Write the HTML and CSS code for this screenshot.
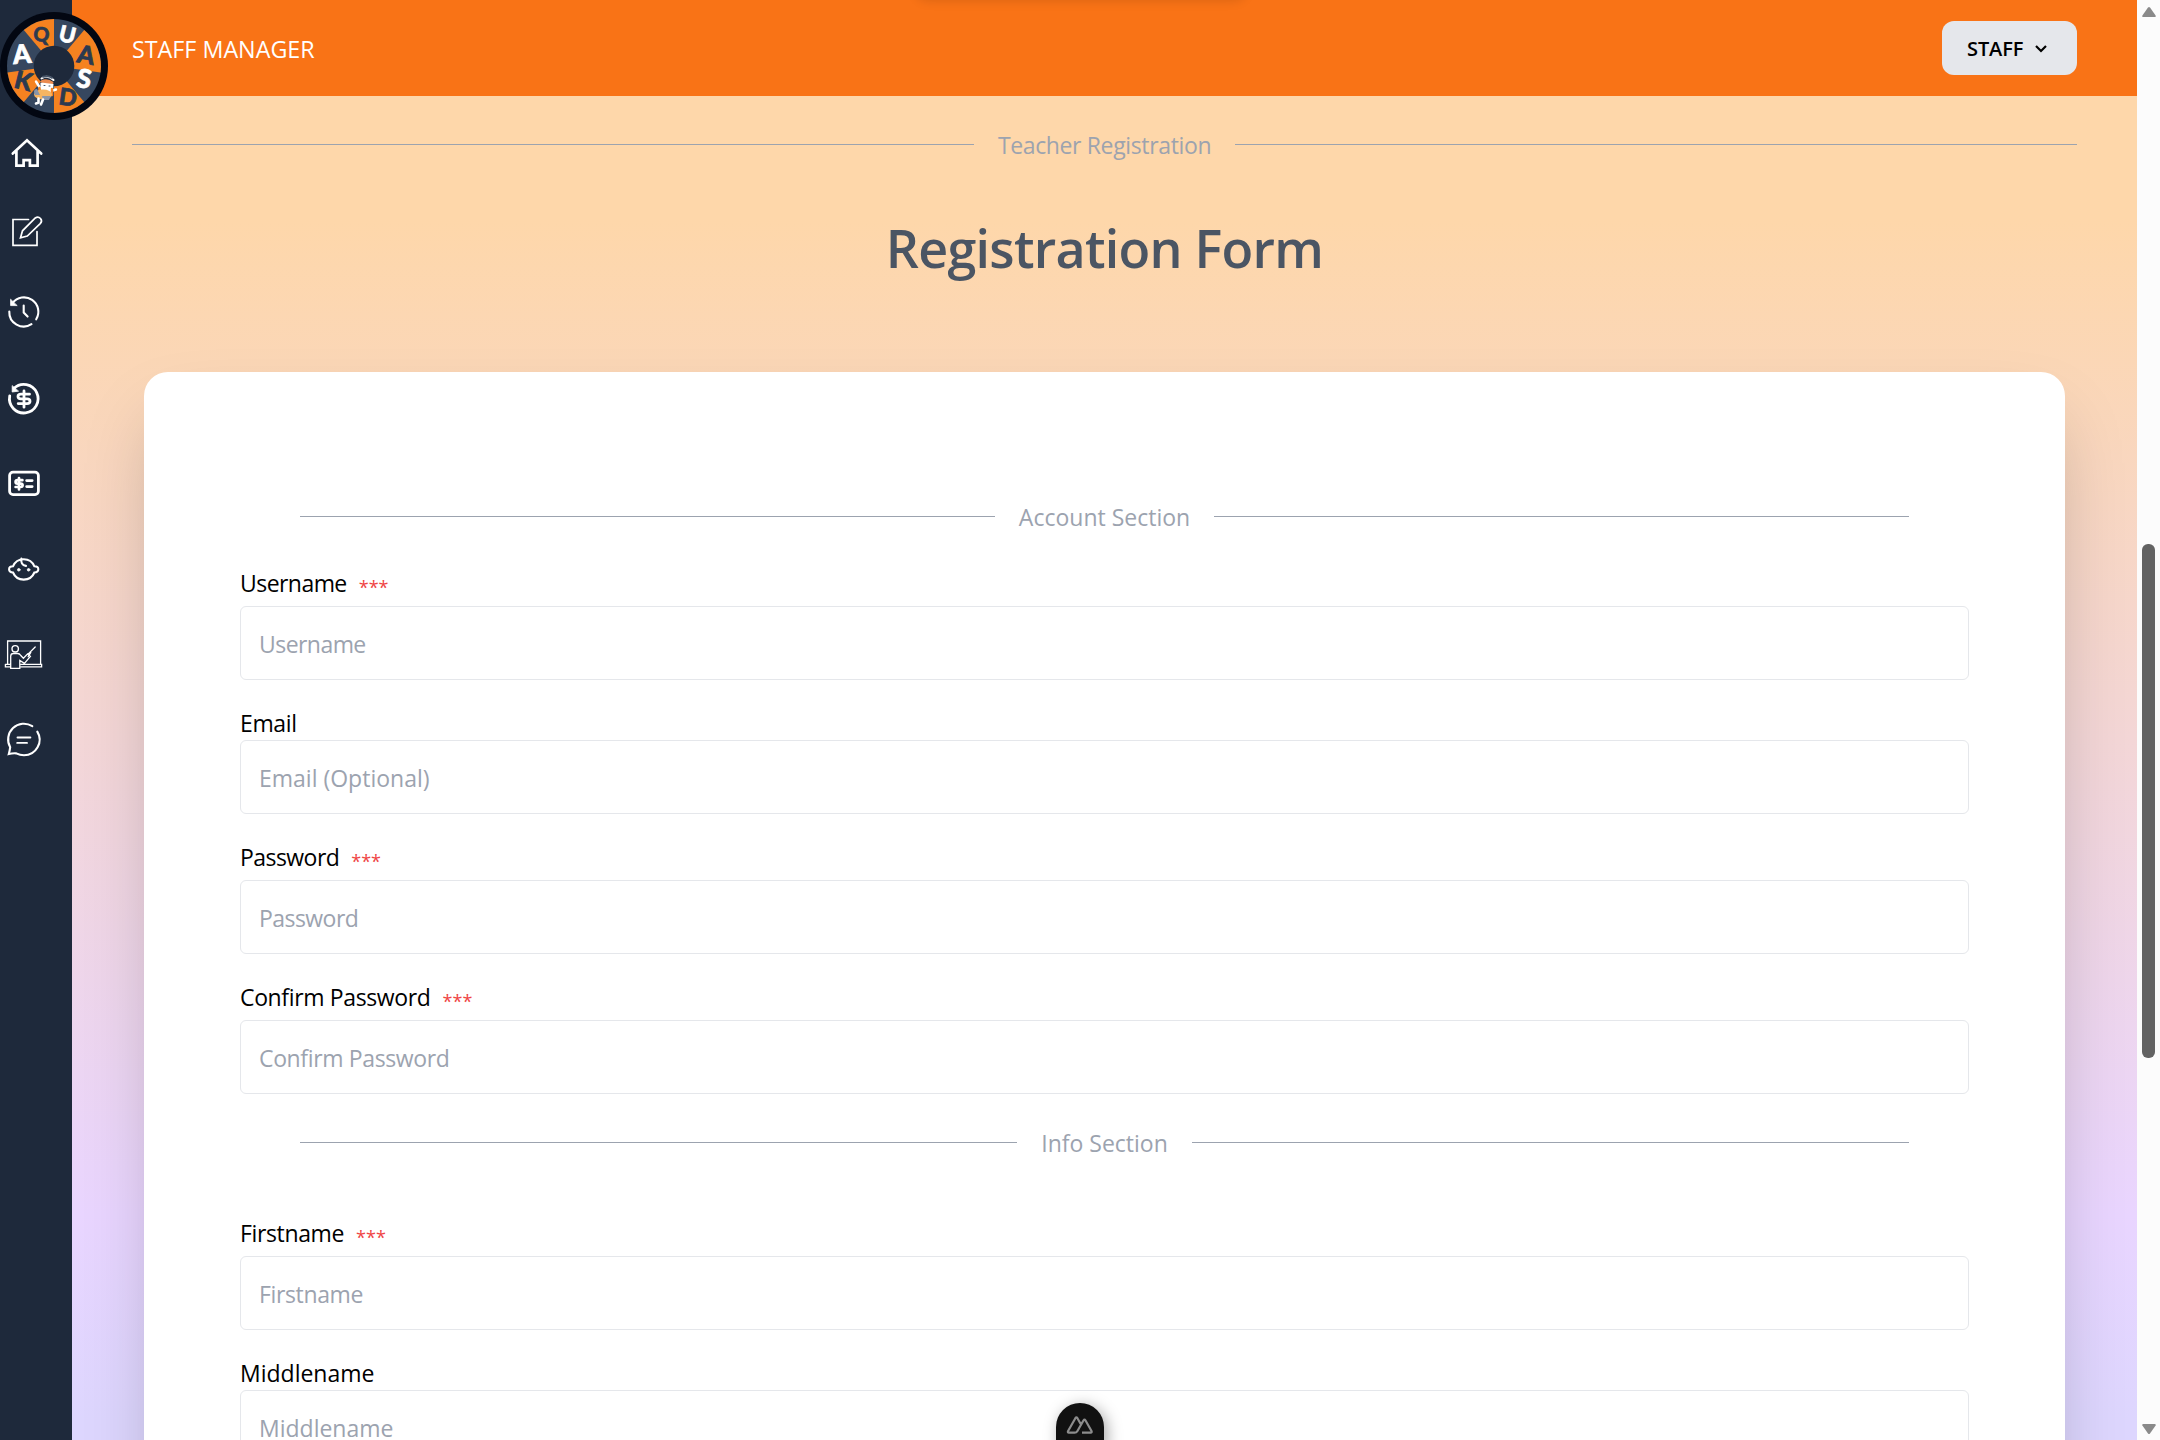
FILE: index.html
```html
<!DOCTYPE html>
<html lang="en">
<head>
<meta charset="utf-8">
<title>Staff Manager</title>
<link rel="stylesheet" href="styles.css">
</head>
<body>
<div class="app">
  <aside class="sidebar">
    <nav class="nav">
      <a class="nav-item nav-item-sm"><svg class="icon" viewBox="0 0 48 48"><path stroke-width="2.7" d="M12.8 24.5 27 11.3 41.2 24.5M16.4 22v14.6h7.2v-5.4h6.3v5.4h7.7V22"/></svg></a>
      <a class="nav-item nav-item-sm"><svg class="icon" viewBox="0 0 48 48"><path stroke-width="1.7" d="M28.5 12.5H13v25.8h24V24.5M20.5 30.8l2-7L35.3 11q2.8-2 5.2.5 2.2 2.6-.3 5.2L27.3 29Z"/></svg></a>
      <a class="nav-item"><svg class="icon" viewBox="0 0 48 48"><path stroke-width="2.1" d="M12.5 15a14.4 14.4 0 0 1 23.7 16.3M31.5 36.2A14.4 14.4 0 0 1 9.3 23.5M23.7 17.6v7l3.9 4"/><path class="solid" d="M10.6 11.6v6h6.2Z"/></svg></a>
      <a class="nav-item"><svg class="icon" viewBox="0 0 48 48"><path stroke-width="2.8" d="M14 14.2A14.3 14.3 0 1 1 9.7 22"/><path stroke-width="2.8" d="M29.5 20.2H21q-3 0-3 2.3T21 24.9h6q3 0 3 2.3t-3 2.4h-8.8M24 17v16.2"/><path class="solid" d="M12.2 12v6l6-.8Z"/></svg></a>
      <a class="nav-item"><svg class="icon" viewBox="0 0 48 48"><rect x="9.6" y="12.2" width="28.8" height="22.4" rx="3.4" stroke-width="2.8"/><path stroke-width="2.7" d="M22.4 20.2h-4.8q-2 0-2 1.7t2 1.7h3q2 0 2 1.7t-2 1.7h-5M19 18v11.4M26.6 20.6h5.6M26.6 26.6h5.6"/></svg></a>
      <a class="nav-item"><svg class="icon" viewBox="0 0 48 48"><path stroke-width="2.1" d="M13 20.3a11.6 11.6 0 0 1 21.4 0c5.2 0 5.2 6 0 6.2a11.6 11.6 0 0 1-21.4 0c-5.2-.2-5.2-6.2 0-6.2ZM21.4 12.5c-.8 4 .8 6.8 4.6 7.4"/><circle class="solid" cx="18.8" cy="23.8" r="1.3"/><circle class="solid" cx="28.6" cy="23.8" r="1.3"/></svg></a>
      <a class="nav-item"><svg class="icon" viewBox="0 0 48 48"><path stroke-width="1.3" d="M7.6 32V9h33v23M5.4 32.3H10M21 32.3h20.6v2.6H21M10 34.9H5.4v-2.6M10.7 36.3V24.2q0-2.7 2.7-2.7h4.2q2 0 3.2 2l2.6 2.7 4-4.2 3 2.3-6 7-4.6-2.8v7.8ZM27.8 22.4l7.4-7.4M28.2 24.6l2.6-4.3"/><circle cx="15.2" cy="16.8" r="3.2" stroke-width="1.4"/></svg></a>
      <a class="nav-item"><svg class="icon" viewBox="0 0 48 48"><path stroke-width="2.1" d="M32.3 9.2A15.7 15.7 0 0 0 10.2 30.2q-.4 3.4-1.4 6.8 4-.9 7.4-.6 3.8 1.9 7.8 1.9A15.6 15.6 0 0 0 37.3 14.6"/><path stroke-width="1.9" d="M17.5 20.5H30.4M17.2 25.9h9.8"/></svg></a>
    </nav>
    <svg class="logo" viewBox="0 0 108 108">
      <circle cx="54" cy="54" r="54" fill="#030712"/>
      <circle cx="54" cy="54" r="47" fill="#36475f"/>
      <g fill="#f58220">
        <path d="M54 54V7A47 47 0 0 0 23.8 18Z"/>
        <path d="M54 54 84.2 18A47 47 0 0 1 100.5 60.5Z"/>
        <path d="M54 54 84.2 90A47 47 0 0 1 54 101Z"/>
        <path d="M54 54 7.5 60.5A47 47 0 0 0 23.8 90Z"/>
      </g>
      <circle cx="54" cy="54" r="20.3" fill="#1e293b"/>
      <g class="logo-text">
        <text class="light" transform="translate(22 42) rotate(-4)" y="9.5">A</text>
        <text transform="translate(41.5 22.5) rotate(8) scale(.76)" y="9">Q</text>
        <text class="light" transform="translate(67.5 22.5) rotate(14) scale(.85)" y="9.5">U</text>
        <text transform="translate(86 42.5) rotate(10) scale(.95)" y="9.5">A</text>
        <text class="light" transform="translate(84 67) rotate(10)" y="9">S</text>
        <text transform="translate(68 85) rotate(8) scale(.9)" y="9.5">D</text>
        <text transform="translate(23.5 68.5) rotate(14) scale(.95)" y="9.5">K</text>
      </g>
      <g stroke-linecap="round">
        <path d="M36 69.5 40 76M56 77.5 51 79" stroke="#fff" stroke-width="2.4"/>
        <path d="M40.5 71q7-4 13 1l-1 12-12-1Z" fill="#fff"/>
        <path d="M41 68.5q6-3 12.5 1.5l-.5 2-12-1.5Z" fill="#e98a50"/>
        <path d="M41.5 66.5q6-4 12 1.5" fill="none" stroke="#fff" stroke-width="2"/>
        <path d="M43 64.8q5-1.5 9 1" fill="none" stroke="#475569" stroke-width="2"/>
        <path d="M39.5 76v5M52 77v6" stroke="#f58220" stroke-width="2.5"/>
        <ellipse cx="43" cy="82.5" rx="9" ry="5" fill="#f6b562"/>
        <path d="M42 84h9l-2 4h-6ZM34 80q0-3 3-3l3 6h-5Z" fill="#8995a8"/>
        <path d="M38.5 86.5v4l-2.5 1M43 87.5l-2 5" stroke="#fff" stroke-width="2.6" fill="none"/>
        <path d="M44 73.5h1M49 74h1" stroke="#475569"/>
      </g>
    </svg>
  </aside>
  <div class="page">
    <header class="topbar">
      <div class="brand">STAFF MANAGER</div>
      <button class="staff-btn"><span>STAFF</span><svg class="chevron" viewBox="0 0 14 10"><path d="m2 2 5 5 5-5"/></svg></button>
      <div class="peek"></div>
    </header>
    <main class="content">
      <div class="divider"><span class="tight">Teacher Registration</span></div>
      <h1 class="title">Registration Form</h1>
      <form class="card">
        <div class="divider inset"><span>Account Section</span></div>
        <div class="fields account">
          <div class="field"><label class="req tighter">Username<i>***</i></label><input class="tighter" placeholder="Username"></div>
          <div class="field"><label class="tight">Email</label><input placeholder="Email (Optional)"></div>
          <div class="field"><label class="req tighter">Password<i>***</i></label><input class="tighter" placeholder="Password"></div>
          <div class="field"><label class="req tight">Confirm Password<i>***</i></label><input class="tight" placeholder="Confirm Password"></div>
        </div>
        <div class="divider inset"><span>Info Section</span></div>
        <div class="fields info">
          <div class="field"><label class="req tight">Firstname<i>***</i></label><input class="tight" placeholder="Firstname"></div>
          <div class="field"><label>Middlename</label><input placeholder="Middlename"></div>
        </div>
      </form>
    </main>
  </div>
  <div class="scrollbar">
    <svg class="arrow" viewBox="0 0 14 10"><path d="M6 .6q1-1 2 0l5.600 7.800q.6 1.600-1 1.600H1.400q-1.600 0-1-1.600Z"/></svg>
    <div class="thumb"></div>
    <svg class="arrow down" viewBox="0 0 14 10"><path d="M6 .6q1-1 2 0l5.600 7.800q.6 1.600-1 1.600H1.400q-1.600 0-1-1.600Z"/></svg>
  </div>
  <div class="devtools"><svg class="devtools-icon" viewBox="0 0 28 20"><path d="M16 17.7h8.6q1.6-.2.9-1.7L19.4 5.3q-.9-1.3-1.8 0l-6.3 10.9q-.9 1.5-2.7 1.5H3q-1.7-.2-.9-1.7L9.5 3q.9-1.3 1.8 0L15 9.5"/></svg></div>
</div>
</body>
</html>
```
FILE: styles.css
```css
* {
  box-sizing: border-box;
}

body {
  margin: 0;
  font-family: "Open Sans", "Noto Sans", sans-serif;
  font-size: 23px;
  color: #000;
}

.app {
  position: relative;
  display: flex;
  width: 2160px;
  height: 1440px;
  overflow: hidden;
}

.sidebar {
  position: relative;
  z-index: 2;
  flex: none;
  width: 72px;
  padding-top: 113.5px;
  background: #1e293b;
}

.nav {
  display: flex;
  flex-direction: column;
}

.nav-item {
  display: flex;
  align-items: center;
  height: 85.8px;
}

.nav-item-sm {
  height: 78px;
}

.icon {
  width: 48px;
  height: 48px;
  fill: none;
  stroke: #fff;
  stroke-linecap: round;
}

.icon .solid {
  fill: #fff;
  stroke-width: 0.8;
}

/* Wheel logo hangs over the top bar */
.logo {
  position: absolute;
  left: 0;
  top: 12px;
  width: 108px;
  height: 108px;
}

.logo-text {
  font: 900 26px Lato, sans-serif;
  text-anchor: middle;
  fill: #2c3a50;
  stroke: #2c3a50;
  stroke-width: 0.8;
}

.logo-text .light {
  fill: #fff;
  stroke: #fff;
}

.page {
  display: flex;
  flex: 1;
  flex-direction: column;
  background: linear-gradient(#fed7aa 220px, #e9d5ff 1215px, #ddd6fe 1420px);
}

.topbar {
  position: relative;
  display: flex;
  flex: none;
  align-items: center;
  justify-content: space-between;
  height: 96px;
  padding: 0 60px;
  overflow: hidden;
  background: #f97316;
  color: #fff;
}

.brand {
  padding-top: 2px;
  font-size: 23.3px;
}

.staff-btn {
  display: flex;
  align-items: center;
  gap: 11px;
  width: 135px;
  height: 54px;
  padding: 1px 0 0 25px;
  border: 0;
  border-radius: 12px;
  background: #e5e7eb;
  color: #000;
  font: 600 20px "Open Sans", sans-serif;
  letter-spacing: -0.1px;
}

.chevron {
  width: 14px;
  height: 10px;
  fill: none;
  stroke: #000;
  stroke-width: 2.2;
}

/* Shadow of the panel tucked above the window */
.peek {
  position: absolute;
  top: -42px;
  left: 844px;
  width: 330px;
  height: 40px;
  border-radius: 12px;
  box-shadow: 0 2px 12px rgba(0, 0, 0, 0.14);
}

.content {
  display: flex;
  flex-direction: column;
  padding: 30px 60px 0;
}

.divider {
  display: flex;
  align-items: center;
  gap: 24px;
  height: 36px;
  color: #9ca3af;
  white-space: nowrap;
}

.divider span {
  padding-top: 2px;
  line-height: 34px;
}

.divider::before,
.divider::after {
  flex: 1;
  height: 1px;
  background: #9ca3af;
  content: "";
}

.tight {
  letter-spacing: -0.36px;
}

.tighter {
  letter-spacing: -0.55px;
}

.title {
  margin: 56px 0 0;
  color: #4b5563;
  font-size: 52px;
  font-weight: 600;
  letter-spacing: -0.73px;
  line-height: 60px;
  text-align: center;
}

.card {
  flex: none;
  height: 1500px;
  margin: 94px 12px 0;
  padding: 126px 96px 0;
  border-radius: 24px;
  background: #fff;
  box-shadow: 0 37.5px 75px -18px rgba(0, 0, 0, 0.25);
}

.inset {
  margin: 0 60px;
}

.fields {
  display: flex;
  flex-direction: column;
  gap: 24px;
}

.account {
  padding: 30px 0;
}

.info {
  padding-top: 54px;
}

.field {
  display: flex;
  flex-direction: column;
}

label {
  display: flex;
  align-items: center;
  gap: 12px;
  height: 36px;
  padding-top: 2px;
  line-height: 34px;
}

.req {
  height: 42px;
  padding-bottom: 6px;
}

label i {
  padding-top: 7px;
  color: #ef4444;
  font-size: 18px;
  font-style: normal;
  letter-spacing: 0;
}

input {
  height: 74px;
  padding: 2px 18px 0;
  border: 1px solid #e5e7eb;
  border-radius: 6px;
  background: #fff;
  font-family: inherit;
  font-size: 23px;
}

input::placeholder {
  color: #9ca3af;
  opacity: 1;
}

.scrollbar {
  display: flex;
  flex: none;
  flex-direction: column;
  align-items: center;
  width: 23px;
  padding: 7px 0 6px;
  background: #fcfcfc;
}

.arrow {
  width: 14px;
  height: 10px;
  fill: #8a8a8a;
}

.down {
  margin-top: auto;
  transform: rotate(180deg);
}

.thumb {
  width: 13px;
  height: 514px;
  margin-top: 527px;
  border-radius: 6px;
  background: #636363;
}

/* Floating toggle, cut off by the window's bottom edge */
.devtools {
  position: absolute;
  left: 1056px;
  bottom: -8px;
  width: 48px;
  height: 45px;
  padding: 12px 10px;
  border-radius: 24px 24px 0 0;
  background: #111;
  box-shadow: 3px 3px 15px rgba(0, 0, 0, 0.35);
}

.devtools-icon {
  display: block;
  width: 28px;
  height: 20px;
  fill: none;
  stroke: #8c8c8c;
  stroke-width: 2.2;
}
```
